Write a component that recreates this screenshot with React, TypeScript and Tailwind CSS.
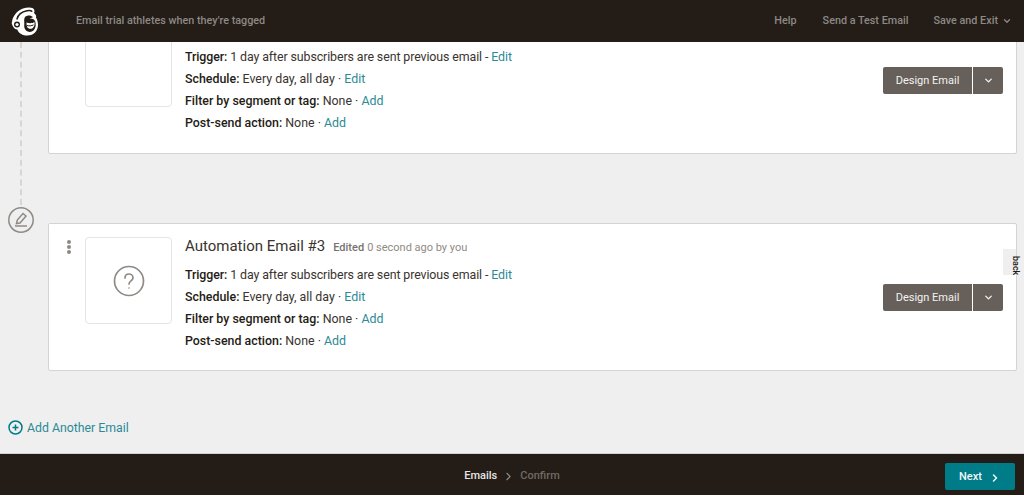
import { ChevronDown, ChevronRight } from "lucide-react";

const font = { fontFamily: "Roboto, 'Liberation Sans', sans-serif" };

const Logo = () => (
  <svg width="28" height="29" viewBox="0 0 28 29" fill="none">
    {/* head */}
    <path d="M1 15.500C1 10 6 3.500 12 1.500c3-1 7-1.500 9.500-.5 2 1 2.500 3 1.500 5 2 1.500 2.500 3 2 4.500 1.500 2.500 2.500 6 1.800 9.500-1 5-5 8.500-10.500 8.500-4.500 0-8.500-2-10-6-3 0-5-3.500-5.800-7z" fill="#fff" />
    {/* cap band */}
    <path d="M6 12C7 8 11 4.800 16 3.800c2-.4 4-.4 4.800.4" stroke="#231c17" strokeWidth="1.500" strokeLinecap="round" />
    {/* ear */}
    <circle cx="6" cy="17.500" r="3" fill="#231c17" />
    <circle cx="6" cy="17.500" r="1.600" fill="#fff" />
    {/* face */}
    <path d="M14 10c2.500-2.200 6-2 8 .3-1.400.7-3 1-4.200 1.500 2.700-.6 5.700.3 6.500 3 .8 2.700.5 6-1.300 8.200-2 2.200-5.500 2.500-7.700.8-2-1.600-2.300-4.300-2-6.500.2-2.500-.8-5.300.7-7.300z" fill="#231c17" />
    <path d="M15.500 15.500c2.500 1 5.800 1 8-.5.400 2.800-.3 5-2 6.200-2 1.300-4.500.5-5.400-1.500-.5-1.300-.7-2.800-.6-4.200z" fill="#fff" />
    <path d="M16 18.500c2 .6 4.500.4 6.500-.6" stroke="#231c17" strokeWidth="1" />
  </svg>
);

const Row = ({ label, value, sep, action }: { label: string; value: string; sep: string; action: string }) => (
  <p className="h-[22px] leading-[22px] text-[12.400px] text-[#3a332e] whitespace-nowrap">
    <span className="font-medium text-[#241c15]">{label}</span> {value} {sep} <span className="text-[#2b8a96]">{action}</span>
  </p>
);

const Details = () => (
  <div>
    <p className="h-[22px] leading-[22px] text-[12.400px] text-[#3a332e] whitespace-nowrap tracking-[-0.1px]">
      <span className="font-medium text-[#241c15]">Trigger:</span> 1 day after subscribers are sent previous email - <span className="text-[#2b8a96]">Edit</span>
    </p>
    <Row label="Schedule:" value="Every day, all day" sep="·" action="Edit" />
    <Row label="Filter by segment or tag:" value="None" sep="·" action="Add" />
    <Row label="Post-send action:" value="None" sep="·" action="Add" />
  </div>
);

const DesignButton = () => (
  <div className="flex h-[27px] text-[#f4f3f2] text-[11px]">
    <div className="w-[89px] pt-[2px] flex items-center justify-center bg-[#675f59] rounded-l-[2px]">Design Email</div>
    <div className="w-[30px] ml-px flex items-center justify-center bg-[#675f59] rounded-r-[2px]">
      <ChevronDown size={11} strokeWidth={3} />
    </div>
  </div>
);

const Card = ({ cut }: { cut?: boolean }) => (
  <div className="relative h-[148px] ml-[48px] mr-[7px] bg-white border border-[#d6d4d1] rounded-[2px] flex items-start pt-[13px]">
    <div className="w-[36px] flex justify-center pt-[2px] pl-[4px]">
      {!cut && (
        <div className="flex flex-col gap-[1.500px] pt-px">
          <span className="w-[3.500px] h-[3.500px] rounded-full bg-[#8d8883]" />
          <span className="w-[3.500px] h-[3.500px] rounded-full bg-[#8d8883]" />
          <span className="w-[3.500px] h-[3.500px] rounded-full bg-[#8d8883]" />
        </div>
      )}
    </div>
    <div className="w-[87px] h-[87px] border border-[#e6e4e2] rounded-[4px] flex items-center justify-center">
      {!cut && (
        <svg width="32" height="32" viewBox="0 0 32 32" fill="none" stroke="#8f8a85" strokeWidth="1.700">
          <circle cx="16" cy="16" r="14.500" />
          <path d="M12 13c0-2.500 1.800-4 4-4s4 1.500 4 3.700c0 3-4 3.300-4 6.300" strokeLinecap="round" />
          <circle cx="16" cy="23" r="0.800" fill="#8f8a85" stroke="none" />
        </svg>
      )}
    </div>
    <div className="ml-[13px] flex-1">
      {/* the title of the first card sits under the header */}
      {cut ? (
        <div className="h-[26px]" />
      ) : (
        <div className="h-[20px] flex items-baseline mb-[7px] whitespace-nowrap">
          <span className="text-[15px] leading-[18px] text-[#3a332e]">Automation Email #3</span>
          <span className="ml-[8px] text-[11px] font-medium text-[#77726d]">Edited</span>
          <span className="ml-[3px] text-[11px] text-[#8f8a85]">0 second ago by you</span>
        </div>
      )}
      <Details />
    </div>
    <div className="absolute right-[13px] top-[60px]">
      <DesignButton />
    </div>
  </div>
);

export default function App() {
  return (
    <div style={font} className="w-[1024px] h-[495px] flex flex-col overflow-hidden bg-[#efefef]">
      <header className="h-[42px] shrink-0 z-10 bg-[#231c17] flex items-center pl-[11px] pr-[12px] text-[#8d8985] text-[10.800px] font-medium">
        <Logo />
        <span className="ml-[37px]">Email trial athletes when they're tagged</span>
        <nav className="ml-auto flex items-center">
          <span>Help</span>
          <span className="ml-[26px]">Send a Test Email</span>
          <span className="ml-[25px]">Save and Exit</span>
          <ChevronDown size={10} strokeWidth={3} className="ml-[4px]" />
        </nav>
      </header>

      <main className="relative flex-1 overflow-hidden">
        <div className="-mt-[36px]">
          <Card cut />
          <div className="mt-[69px]">
            <Card />
          </div>
        </div>

        {/* timeline */}
        <div className="absolute left-[20px] top-0 h-[163px] border-l-2 border-dashed border-[#d8d6d4]" />
        <svg className="absolute left-[8px] top-[165px]" width="26" height="26" viewBox="0 0 26 26" fill="none" stroke="#8f8a85" strokeWidth="1.500">
          <circle cx="13" cy="13" r="12.200" />
          <path d="M8.500 16.500l.8-3.500L15 6.500l3 2.500-6 7z" />
          <path d="M7 19h12" />
        </svg>

        <div className="absolute right-[8px] top-[207px] w-[13px] h-[26px] bg-[#efefef]" />
        <span className="absolute right-[4px] top-[214px] text-[9px] leading-none font-medium text-[#241c15] [writing-mode:vertical-rl]">back</span>

        <div className="absolute left-[8px] top-[376px] flex items-center text-[#2b8a96] text-[12.300px]">
          <svg width="15" height="15" viewBox="0 0 15 15" fill="none" stroke="#007c89" strokeWidth="1.500">
            <circle cx="7.500" cy="7.500" r="6.500" />
            <path d="M7.500 4.500v6M4.500 7.500h6" />
          </svg>
          <span className="ml-[4px] pt-[1px]">Add Another Email</span>
        </div>
      </main>

      <footer className="relative h-[42px] shrink-0 bg-[#231c17] flex items-center justify-center pt-[3px] text-[11px] font-medium border-t border-[#d4d2d0]">
        <span className="text-[#e8e6e4]">Emails</span>
        <ChevronRight size={13} strokeWidth={2} className="mx-[5px] text-[#8d8985]" />
        <span className="text-[#6f6a66]">Confirm</span>
        <div className="absolute right-[9px] top-[9px] w-[70px] h-[27px] pt-[2px] rounded-[2px] bg-[#007c89] text-[#eef6f7] text-[11px] font-medium flex items-center justify-center">
          Next
          <ChevronRight size={12} strokeWidth={3} className="ml-[7px]" />
        </div>
      </footer>
    </div>
  );
}
